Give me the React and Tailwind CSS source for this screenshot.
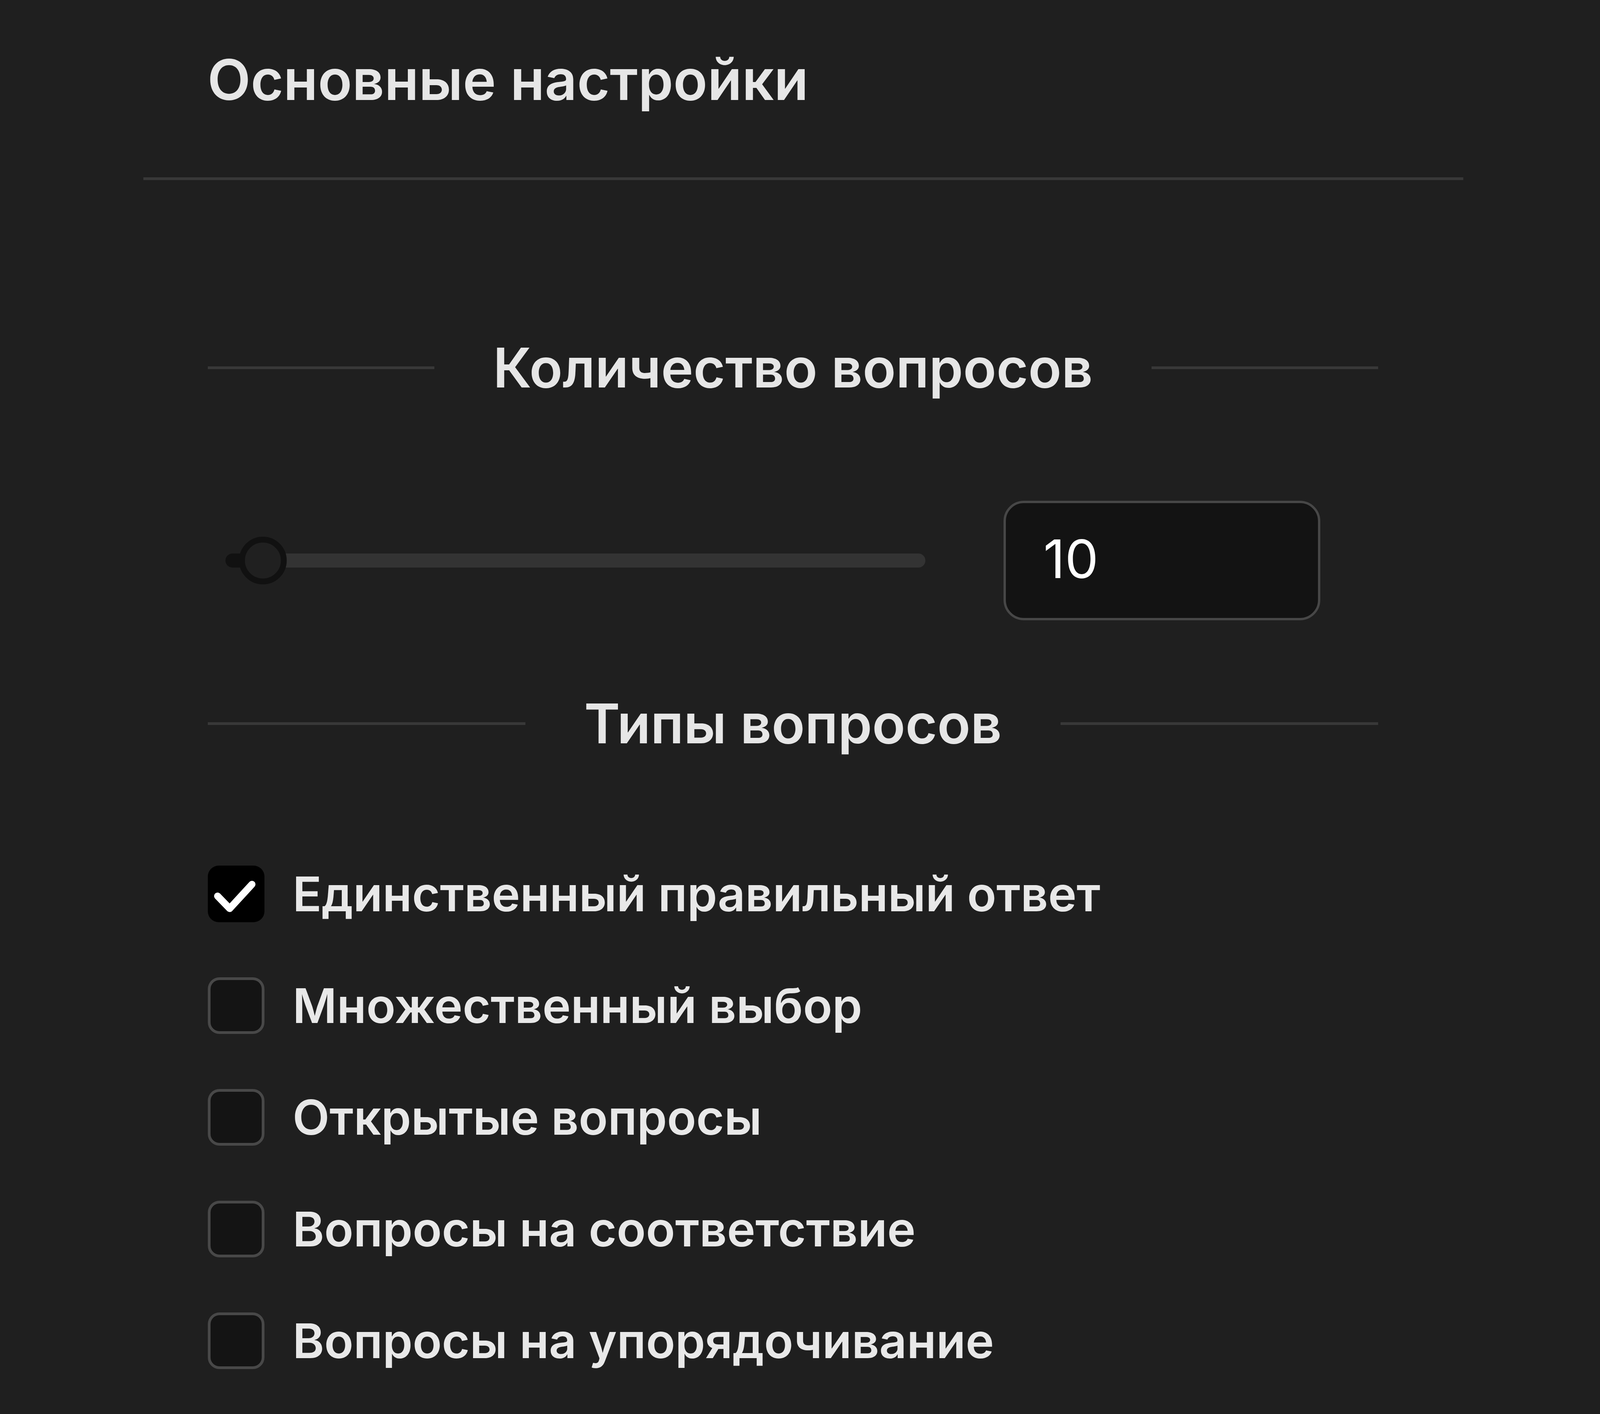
import React, { useState } from "react";

const types = [
    "Единственный правильный ответ",
    "Множественный выбор",
    "Открытые вопросы",
    "Вопросы на соответствие",
    "Вопросы на упорядочивание",
];

function SectionTitle({ children }) {
    return (
        <div className="flex items-center gap-[150px]">
            <div className="flex-1 h-[7px] bg-[#383838]" />
            <h2 className="text-[140px] leading-none font-semibold text-[#e6e6e6] whitespace-nowrap">
                {children}
            </h2>
            <div className="flex-1 h-[7px] bg-[#383838]" />
        </div>
    );
}

function Checkbox({ checked, onToggle, label }) {
    return (
        <button type="button" onClick={onToggle} className="flex items-center gap-[72px] text-left">
            {checked ? (
                <span className="w-[145px] h-[145px] rounded-[28px] bg-black flex items-center justify-center shrink-0">
                    <svg viewBox="0 0 145 145" className="w-[145px] h-[145px]">
                        <path
                            d="M25 78 56 110 113 48"
                            fill="none"
                            stroke="#ffffff"
                            strokeWidth="18"
                            strokeLinecap="round"
                            strokeLinejoin="round"
                        />
                    </svg>
                </span>
            ) : (
                <span className="w-[145px] h-[145px] rounded-[30px] bg-[#141414] border-[7px] border-[#484848] shrink-0" />
            )}
            <span className="text-[123px] leading-none font-semibold text-[#e8e8e8] whitespace-nowrap">{label}</span>
        </button>
    );
}

export default function App() {
    const [count, setCount] = useState(10);
    const [selected, setSelected] = useState([0]);

    const toggle = (i) => {
        setSelected(prev => prev.includes(i) ? prev.filter(x => x !== i) : [...prev, i]);
    };

    return (
        <div className="min-h-screen w-full bg-[#1f1f1f] font-['Inter','Noto_Sans',sans-serif] overflow-hidden">
            {/* Header */}
            <div className="ml-[367px] w-[3379px] pt-[132px]">
                <h1 className="pl-[164px] text-[144px] leading-none font-semibold text-[#e6e6e6]">
                    Основные настройки
                </h1>
                <div className="mt-[178px] h-[7px] bg-[#383838]" />
            </div>

            {/* Content */}
            <div className="ml-[532px] w-[2996px] pt-[410px]">
                <SectionTitle>Количество вопросов</SectionTitle>

                <div className="mt-[271px] pl-[45px] flex items-center gap-[200px]">
                    <div className="relative w-[1792px] h-[36px] rounded-full bg-[#333333]">
                        <div className="absolute left-0 top-0 h-[36px] w-[100px] rounded-full bg-[#111111]" />
                        <div className="absolute left-[35px] top-1/2 -translate-y-1/2 w-[122px] h-[122px] rounded-full border-[15px] border-[#111111] bg-[#202020]" />
                    </div>
                    <input
                        type="text"
                        value={count}
                        onChange={(e) => setCount(e.target.value)}
                        className="w-[811px] h-[306px] rounded-[52px] border-[6px] border-[#474747] bg-[#131313] pl-[96px] pb-[10px] text-[136px] text-white outline-none"
                    />
                </div>

                <div className="mt-[194px]">
                    <SectionTitle>Типы вопросов</SectionTitle>
                </div>

                <div className="mt-[294px] flex flex-col gap-[141px]">
                    {types.map((t, i) => (
                        <Checkbox key={t} label={t} checked={selected.includes(i)} onToggle={() => toggle(i)} />
                    ))}
                </div>
            </div>
        </div>
    );
}
